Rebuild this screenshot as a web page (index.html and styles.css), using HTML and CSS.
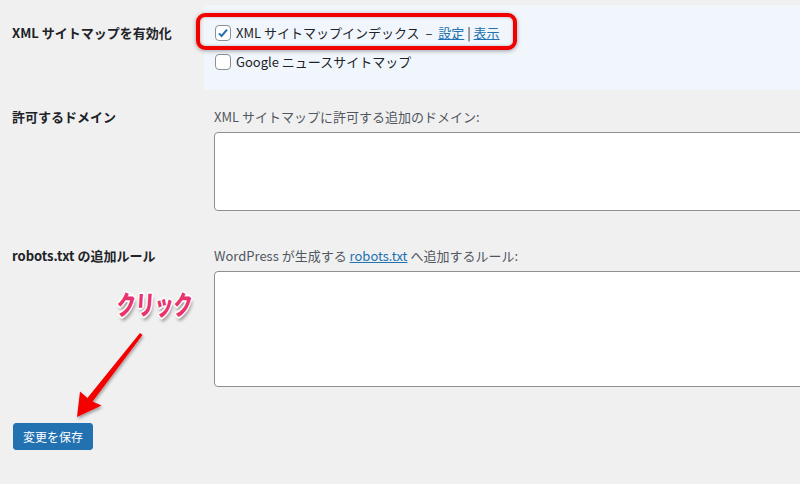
FILE: index.html
```html
<!DOCTYPE html>
<html>
<head lang="ja">
    <meta charset="UTF-8">
    <title>XML サイトマップ設定</title>
    <link rel="stylesheet" href="styles.css">
</head>
<body>
<div class="wrap">
    <div class="row first">
        <div class="th">XML サイトマップを有効化</div>
        <div class="td panel">
            <label class="check">
                <span class="box"><svg width="14" height="14" viewBox="0 0 14 14"><path d="M3 7.4l2.6 2.6L11 3.6" fill="none" stroke="#2271b1" stroke-width="2"/></svg></span>
                XML サイトマップインデックス&nbsp;&nbsp;–&nbsp;&nbsp;<a href="">設定</a>&nbsp;|&nbsp;<a href="">表示</a>
            </label>
            <label class="check">
                <span class="box"></span>
                Google ニュースサイトマップ
            </label>
        </div>
    </div>
    <div class="row">
        <div class="th">許可するドメイン</div>
        <div class="td">
            <p class="desc">XML サイトマップに許可する追加のドメイン:</p>
            <textarea class="area h79"></textarea>
        </div>
    </div>
    <div class="row last">
        <div class="th">robots.txt の追加ルール</div>
        <div class="td">
            <p class="desc">WordPress が生成する <a href="">robots.txt</a> へ追加するルール:</p>
            <textarea class="area h116"></textarea>
        </div>
    </div>
    <p class="submit"><button class="btn">変更を保存</button></p>
</div>

<!-- 注釈 -->
<div class="note-box"></div>
<div class="note-text">クリック</div>
<svg class="note-arrow" width="800" height="484" viewBox="0 0 800 484">
    <defs>
        <filter id="sh" x="-20%" y="-20%" width="140%" height="140%">
            <feDropShadow dx="1" dy="2" stdDeviation="1.5" flood-color="#000" flood-opacity="0.35"/>
        </filter>
    </defs>
    <polygon points="140,333 142.5,335 92.6,401.6 101.5,405.5 77,417 80,391.5 87.4,398" fill="#f40000" filter="url(#sh)"/>
</svg>
</body>
</html>
```

FILE: styles.css
```css
*{margin:0;padding:0;box-sizing:border-box;}
html,body{overflow:hidden;}
body{background:#f0f0f1;color:#1d2327;font-size:13px;font-family:"Noto Sans CJK JP","Noto Sans",sans-serif;width:800px;height:484px;position:relative;}
a{color:#2271b1;text-decoration:underline;}
.wrap{padding-top:5px;}
.row{display:grid;grid-template-columns:192px 1fr;padding:17px 0 18px 12px;}
.row.first{padding:0 0 0 12px;}
.row.last{padding-bottom:0;}
.th{font-weight:bold;line-height:20px;}
.first .th{padding-top:13px;line-height:29px;}
.td{padding-left:10px;overflow:hidden;}
.panel{background:#f0f6fc;padding:13px 10px 14px 11px;}
.check{display:flex;align-items:center;height:29px;line-height:29px;white-space:nowrap;}
.box{display:flex;align-items:center;justify-content:center;width:16px;height:16px;margin-right:5px;background:#fff;border:1px solid #8c8f94;border-radius:4px;}
.desc{line-height:20px;color:#50575e;}
.area{display:block;width:calc(100% + 6px);margin-top:5px;border:1px solid #8c8f94;border-radius:4px;background:#fff;resize:none;}
.h79{height:79px;}
.h116{height:116px;}
.submit{padding:36px 0 0 13px;}
.btn{height:27px;padding:0 9px;font-size:12px;line-height:25px;font-family:inherit;color:#fff;background:#2271b1;border:1px solid #2271b1;border-radius:3px;}
.note-box{position:absolute;left:196px;top:13px;width:321px;height:37px;border:4px solid #f20000;border-radius:9px;box-shadow:0 1px 4px rgba(0,0,0,.35),inset 0 0 3px rgba(0,0,0,.3);}
.note-text{position:absolute;left:118px;top:286px;font-size:27px;font-weight:900;line-height:36px;color:#e8336f;transform:scaleX(.7) skewX(-5deg);transform-origin:left top;white-space:nowrap;
    text-shadow:-1px -1px 0 #fff,1px -1px 0 #fff,-1px 1px 0 #fff,1px 1px 0 #fff,0 2px 0 #fff,2px 0 0 #fff,-2px 0 0 #fff,0 -2px 0 #fff,2px 4px 4px rgba(0,0,0,.4);}
.note-arrow{position:absolute;left:0;top:0;pointer-events:none;}
```
